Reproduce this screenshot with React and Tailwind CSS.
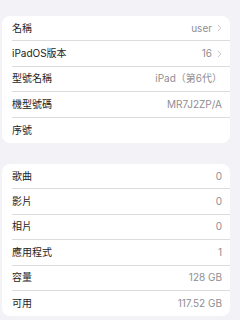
import React from "react";

const font = { fontFamily: 'Inter, "Noto Sans CJK TC", sans-serif' };

function Chevron() {
  return (
    <svg width="5" height="8" viewBox="0 0 5 8" className="ml-[5px]" fill="none">
      <path d="M1.2 1.2l2.6 2.8-2.6 2.8" stroke="#c7c7cc" strokeWidth="1" strokeLinecap="round" strokeLinejoin="round" />
    </svg>
  );
}

function Row({ label, value, chevron, last }) {
  return (
    <div className="flex h-[25.4px] items-stretch pl-[10px]">
      <div className={"flex flex-1 items-center pr-[8px] " + (last ? "" : "border-b-[0.5px] border-[#dcdce0]")}>
        <span className="flex-1 text-[10px] text-[#1c1c1e]">{label}</span>
        <span className="text-[10px] text-[#8e8e93]">{value}</span>
        {chevron && <Chevron />}
      </div>
    </div>
  );
}

function Card({ rows }) {
  return (
    <div className="mx-[2px] w-[228px] overflow-hidden rounded-[8px] bg-white">
      {rows.map((r, i) => (
        <Row key={i} {...r} last={i === rows.length - 1} />
      ))}
    </div>
  );
}

export default function App() {
  return (
    <div className="h-[320px] w-[240px] overflow-hidden bg-[#f2f2f7] pt-[16px]" style={font}>
      <Card
        rows={[
          { label: "名稱", value: "user", chevron: true },
          { label: "iPadOS版本", value: "16", chevron: true },
          { label: "型號名稱", value: "iPad（第6代）" },
          { label: "機型號碼", value: "MR7J2ZP/A" },
          { label: "序號", value: "" },
        ]}
      />
      <div className="h-[21px]" />
      <Card
        rows={[
          { label: "歌曲", value: "0" },
          { label: "影片", value: "0" },
          { label: "相片", value: "0" },
          { label: "應用程式", value: "1" },
          { label: "容量", value: "128 GB" },
          { label: "可用", value: "117.52 GB" },
        ]}
      />
    </div>
  );
}
